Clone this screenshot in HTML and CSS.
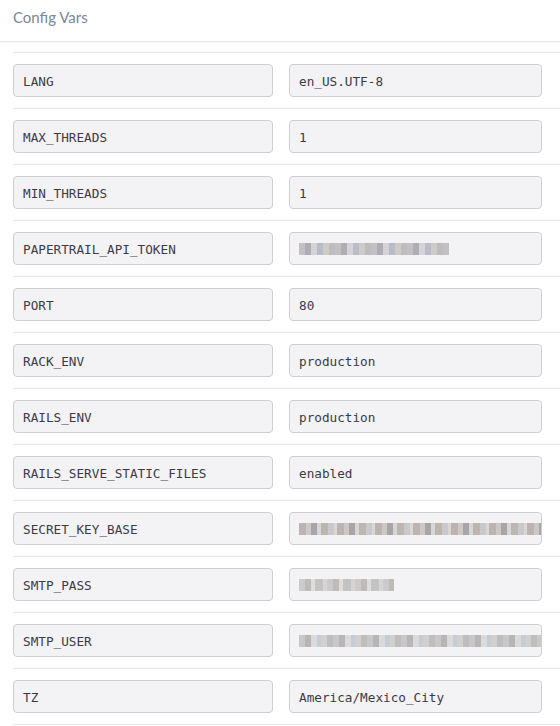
FILE: index.html
```html
<!DOCTYPE html>
<html>
<head>
<meta charset="utf-8">
<link rel="stylesheet" href="styles.css">
</head>
<body>
<div class="header"><span class="title">Config Vars</span></div>
<div class="list">
  <div class="row"><div class="field key">LANG</div><div class="field val">en_US.UTF-8</div></div>
  <div class="row"><div class="field key">MAX_THREADS</div><div class="field val">1</div></div>
  <div class="row"><div class="field key">MIN_THREADS</div><div class="field val">1</div></div>
  <div class="row"><div class="field key">PAPERTRAIL_API_TOKEN</div><div class="field val"><span class="blur b1" style="width:150px"></span></div></div>
  <div class="row"><div class="field key">PORT</div><div class="field val">80</div></div>
  <div class="row"><div class="field key">RACK_ENV</div><div class="field val">production</div></div>
  <div class="row"><div class="field key">RAILS_ENV</div><div class="field val">production</div></div>
  <div class="row"><div class="field key">RAILS_SERVE_STATIC_FILES</div><div class="field val">enabled</div></div>
  <div class="row"><div class="field key">SECRET_KEY_BASE</div><div class="field val"><span class="blur b2" style="width:243px"></span></div></div>
  <div class="row"><div class="field key">SMTP_PASS</div><div class="field val"><span class="blur b3" style="width:95px"></span></div></div>
  <div class="row"><div class="field key">SMTP_USER</div><div class="field val"><span class="blur b4" style="width:243px"></span></div></div>
  <div class="row"><div class="field key">TZ</div><div class="field val">America/Mexico_City</div></div>
</div>
</body>
</html>
```
FILE: styles.css
```css
html, body {
  margin: 0;
  padding: 0;
  background: #ffffff;
}
body {
  width: 560px;
  overflow: hidden;
}
.header {
  height: 42px;
  box-sizing: border-box;
  padding: 8px 13px 0;
  border-bottom: 1px solid #e8e8ea;
  box-shadow: 0 1px 1px rgba(0,0,0,0.03);
}
.title {
  font-family: Lato, "Open Sans", sans-serif;
  font-size: 15px;
  color: #7b879a;
}
.list {
  margin-top: 10px;
  margin-left: 13px;
  border-top: 1px solid #e6e6e8;
}
.row {
  display: flex;
  gap: 16px;
  padding: 11px 0;
  border-bottom: 1px solid #e6e6e8;
}
.field {
  box-sizing: border-box;
  height: 33px;
  padding: 1px 9px 0;
  display: flex;
  align-items: center;
  background: #f3f3f5;
  border: 1px solid #cfcfd3;
  border-radius: 4px;
  font-family: "DejaVu Sans Mono", monospace;
  font-size: 12.7px;
  color: #3d3a48;
  overflow: hidden;
  white-space: nowrap;
}
.key { width: 260px; }
.val { width: 253px; }
.blur {
  display: block;
  height: 12px;
  flex: none;
}
.b1 {
  background: repeating-linear-gradient(90deg, #c3c0c4 0 6px, #b0acb3 6px 12px, #d4d4d8 12px 18px, #b9bcc9 18px 24px, #cfcbc6 24px 30px, #bdbdc0 30px 36px);
}
.b2 {
  background: repeating-linear-gradient(90deg, #bbb4b2 0 7px, #cdc8c6 7px 12px, #a9a4a6 12px 18px, #d6d6d9 18px 22px, #bbb6ae 22px 29px, #c9c9cc 29px 35px, #dad7d2 35px 38px);
}
.b3 {
  background: repeating-linear-gradient(90deg, #cdcacb 0 6px, #bfbbb8 6px 12px, #dedcdc 12px 16px, #c4c3c4 16px 24px, #d6d5d6 24px 28px);
}
.b4 {
  background: repeating-linear-gradient(90deg, #c9c8c9 0 6px, #b8b5b5 6px 12px, #dadada 12px 18px, #c6ccd3 18px 22px, #d2d0cc 22px 28px, #bebebe 28px 34px);
}
```
